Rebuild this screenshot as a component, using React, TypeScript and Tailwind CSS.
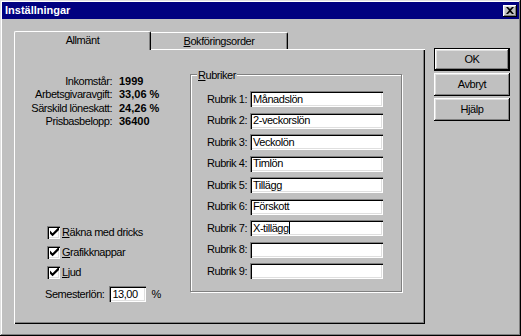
import React from 'react';

const raised =
  "shadow-[inset_-1px_-1px_#000,inset_1px_1px_#fff,inset_-2px_-2px_#808080,inset_2px_2px_#dfdfdf]";
const sunken =
  "shadow-[inset_1px_1px_#808080,inset_2px_2px_#000,inset_-1px_-1px_#fff,inset_-2px_-2px_#dfdfdf]";

const info = [
  { label: "Inkomstår:", value: "1999" },
  { label: "Arbetsgivaravgift:", value: "33,06 %" },
  { label: "Särskild löneskatt:", value: "24,26 %" },
  { label: "Prisbasbelopp:", value: "36400" },
];

const rubriker = [
  "Månadslön",
  "2-veckorslön",
  "Veckolön",
  "Timlön",
  "Tillägg",
  "Förskott",
  "X-tillägg",
  "",
  "",
];

const checks = [
  { key: "R", rest: "äkna med dricks" },
  { key: "G", rest: "rafikknappar" },
  { key: "L", rest: "jud" },
];

const Checkbox = () => (
  <span className={`w-[13px] h-[13px] bg-white flex items-center justify-center ${sunken}`}>
    <svg width="9" height="9" viewBox="0 0 7 7" className="mt-[1px] ml-[1px]">
      <path d="M0 2 L0 4.5 L2 6.5 L7 1.5 L7 -1 L2 4 Z" fill="#000" />
    </svg>
  </span>
);

const Button = ({ children, primary }: { children: React.ReactNode; primary?: boolean }) => (
  <div className={primary ? "border border-black" : ""}>
    <div
      className={`flex items-center justify-center bg-[#c0c0c0] ${raised} ${
        primary ? "h-[21px]" : "h-[23px]"
      }`}
    >
      {children}
    </div>
  </div>
);

export default function App() {
  return (
    <div
      className="w-[521px] h-[336px] bg-[#c0c0c0] p-[2px] text-black text-[11px] tracking-[-0.45px] shadow-[inset_-1px_-1px_#000,inset_1px_1px_#dfdfdf,inset_-2px_-2px_#808080,inset_2px_2px_#fff] flex flex-col"
      style={{ fontFamily: '"Liberation Sans", Arial, sans-serif' }}
    >
      {/* title bar */}
      <div className="h-[17px] bg-[#000080] flex items-center justify-between pl-[3px] pr-[2px]">
        <span className="text-white font-bold text-[11px] tracking-normal">Inställningar</span>
        <div className={`w-[14px] h-[12px] bg-[#c0c0c0] flex items-center justify-center ${raised}`}>
          <svg width="8" height="7" viewBox="0 0 8 7">
            <path d="M0 0h2l2 2 2-2h2L5 3.5 8 7H6L4 5 2 7H0l3-3.5z" fill="#000" />
          </svg>
        </div>
      </div>

      {/* body */}
      <div className="flex pt-[12px] pl-[12px]">
        <div className="w-[411px] flex flex-col">
          {/* tabs */}
          <div className="flex items-start h-[18px]">
            <div className="relative z-10 w-[137px] h-[19px] bg-[#c0c0c0] border-l border-t border-white border-r border-r-black rounded-tl-[2px] rounded-tr-[2px] shadow-[inset_-1px_0_#808080] flex items-center justify-center pb-[2px]">
              Allmänt
            </div>
            <div className="mt-[1px] w-[137px] h-[17px] border-t border-white border-r border-r-black rounded-tr-[2px] shadow-[inset_-1px_0_#808080] flex items-center justify-center">
              <span>
                <span className="underline">B</span>okföringsorder
              </span>
            </div>
          </div>

          {/* panel */}
          <div className="h-[275px] flex shadow-[inset_1px_1px_#fff,inset_-1px_-1px_#000,inset_-2px_-2px_#808080]">
            {/* left column */}
            <div className="w-[176px] pt-[25px] flex flex-col">
              <div className="grid grid-cols-[98px_auto] auto-rows-[13.6px] gap-x-[7px] items-center">
                {info.map((r) => (
                  <React.Fragment key={r.label}>
                    <span className="text-right">{r.label}</span>
                    <span className="font-bold tracking-normal">{r.value}</span>
                  </React.Fragment>
                ))}
              </div>

              <div className="mt-[94px] pl-[33px] flex flex-col">
                {checks.map((c) => (
                  <div key={c.key} className="h-[20px] flex items-center gap-[2px]">
                    <Checkbox />
                    <span>
                      <span className="underline">{c.key}</span>
                      {c.rest}
                    </span>
                  </div>
                ))}
              </div>

              <div className="mt-[4px] pl-[31px] flex items-center h-[16px]">
                <span>Semesterlön:</span>
                <div className={`ml-[5px] w-[37px] h-[16px] bg-white pl-[3px] flex items-center ${sunken}`}>
                  13,00
                </div>
                <span className="ml-[5px]">%</span>
              </div>
            </div>

            {/* group box */}
            <div className="mt-[25px] w-[212px] h-[218px] relative border border-[#808080] shadow-[inset_1px_1px_#fff,1px_1px_#fff] pt-[16px] pl-[16px]">
              <span className="absolute -top-[8px] left-[6px] bg-[#c0c0c0] px-[1px]">
                <span className="underline">R</span>ubriker
              </span>
              <div className="flex flex-col gap-[5.5px]">
                {rubriker.map((v, i) => (
                  <div key={i} className="flex items-center h-[16px]">
                    <span className="w-[43px]">Rubrik {i + 1}:</span>
                    <div className={`w-[133px] h-[16px] bg-white pl-[3px] flex items-center ${sunken}`}>
                      <span>{v}</span>
                      {i === 6 && <span className="w-px h-[12px] bg-black" />}
                    </div>
                  </div>
                ))}
              </div>
            </div>
          </div>
        </div>

        {/* buttons */}
        <div className="ml-[9px] w-[76px] pt-[17px] flex flex-col gap-[2px]">
          <Button primary>OK</Button>
          <Button>Avbryt</Button>
          <Button>Hjälp</Button>
        </div>
      </div>
    </div>
  );
}
